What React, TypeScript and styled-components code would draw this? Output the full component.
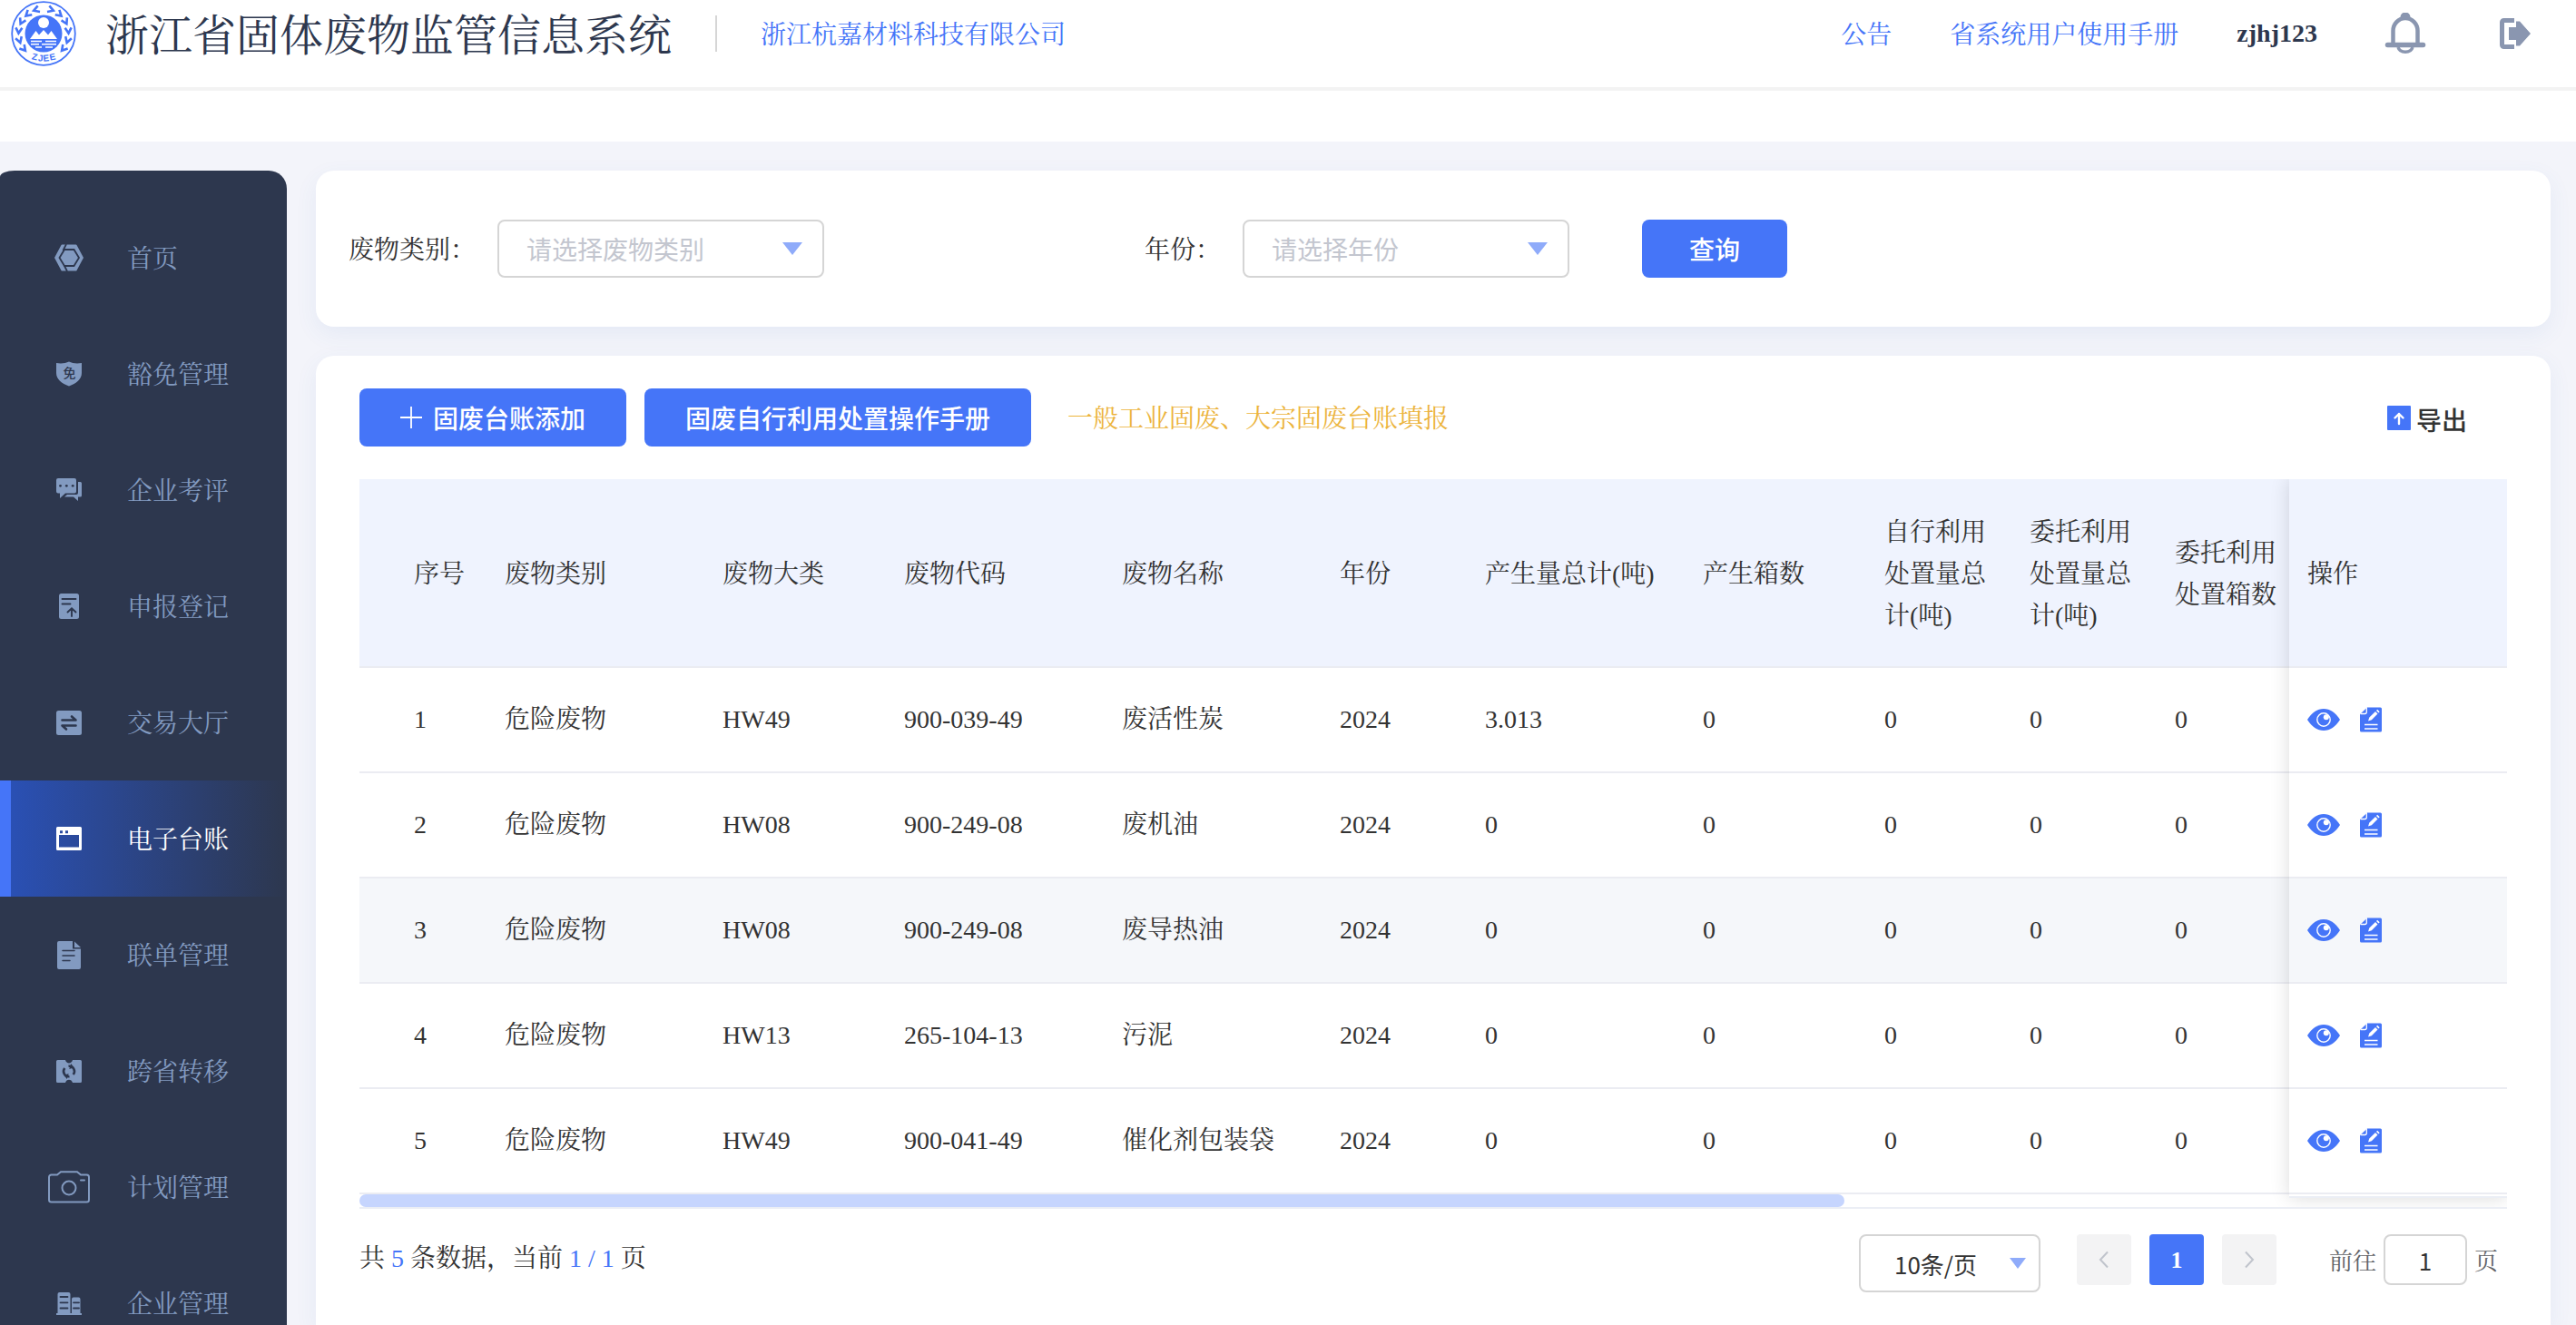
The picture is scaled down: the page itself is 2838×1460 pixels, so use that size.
import React from "react";
import styled, { createGlobalStyle, css } from "styled-components";

const BLUE = "#4575f8";
const INK = "#2d374e";
const MUTED = "#829ac0";
const SERIF = `"Liberation Serif", "Songti SC", "Noto Serif CJK SC", "Noto Sans CJK SC", serif`;
const SANS = `"PingFang SC", "Noto Sans CJK SC", sans-serif`;

const GlobalStyle = createGlobalStyle`
  * { box-sizing: border-box; }
  body { margin: 0; background: #f3f4fa; font: 28px/1.5 ${SERIF}; color: #333; }
  button, input, select { font: inherit; color: inherit; margin: 0; }
  a { color: inherit; text-decoration: none; }
`;

const Page = styled.div`
  height: 100vh;
  overflow: hidden;
  display: flex;
  flex-direction: column;
`;

/* ---------- header ---------- */

const Header = styled.header`
  flex: none;
  display: flex;
  align-items: center;
  justify-content: space-between;
  height: 100px;
  padding: 0 50px 22px 12px;
  background: #fff;
  border-bottom: 4px solid #f3f3f3;
`;

const TabStrip = styled.div`
  flex: none;
  height: 56px;
  background: #fff;
`;

const HeaderGroup = styled.div<{ $gap: number }>`
  display: flex;
  align-items: center;
  gap: ${(p) => p.$gap}px;
`;

const Brand = styled.h1`
  margin: 0 0 0 32px;
  padding-top: 6px;
  font-size: 48px;
  line-height: 72px;
  font-weight: 400;
  color: ${INK};
`;

const Divider = styled.span`
  width: 2px;
  height: 40px;
  margin: 0 48px 0 48px;
  background: #d6d6d6;
`;

const HeaderLink = styled.a`
  padding-top: 4px;
  color: ${BLUE};
`;

const UserName = styled.strong`
  margin-right: 10px;
  color: ${INK};
`;

const IconButton = styled.button`
  display: flex;
  padding: 0;
  border: 0;
  background: none;
  color: #8a96b0;
  cursor: pointer;
`;

/* ---------- shell ---------- */

const Shell = styled.div`
  flex: 1;
  min-height: 0;
  display: flex;
  gap: 32px;
  padding: 32px 28px 0 0;
`;

const Sidebar = styled.nav`
  flex: none;
  width: 316px;
  padding-top: 32px;
  overflow: hidden;
  background: ${INK};
  border-radius: 16px 20px 0 0 / 7px 20px 0 0;
`;

const NavItem = styled.a<{ $active?: boolean }>`
  display: flex;
  align-items: center;
  gap: 40px;
  height: 128px;
  padding-left: 40px;
  border-left: 12px solid transparent;
  color: ${MUTED};
  ${(p) =>
    p.$active &&
    css`
      color: #fff;
      border-left-color: ${BLUE};
      background: linear-gradient(90deg, #2a50b4, ${INK}) padding-box;
    `}
`;

const NavIcon = styled.span`
  display: flex;
  justify-content: center;
  width: 48px;
`;

const NavLabel = styled.span`
  padding-top: 4px;
`;

const Main = styled.main`
  flex: 1;
  min-width: 0;
  display: flex;
  flex-direction: column;
  gap: 32px;
`;

const Card = styled.section`
  background: #fff;
  border-radius: 20px;
  box-shadow: 0 8px 24px rgba(69, 117, 190, 0.08);
`;

/* ---------- filter ---------- */

const FilterForm = styled.form`
  display: grid;
  grid-template-columns: minmax(524px, 797px) auto auto;
  justify-content: start;
  align-items: center;
  column-gap: 80px;
  height: 172px;
  padding: 0 36px;
`;

const Field = styled.div`
  display: flex;
  align-items: center;
  gap: 24px;
`;

const FieldLabel = styled.label`
  padding-top: 4px;
`;

const SelectBox = styled.div<{ $width: number }>`
  position: relative;
  width: ${(p) => p.$width}px;
`;

const Select = styled.select<{ $pad: number; $size: number; $muted?: boolean }>`
  appearance: none;
  display: block;
  width: 100%;
  height: 64px;
  padding: 0 ${(p) => p.$pad}px;
  border: 2px solid #d5d5d5;
  border-radius: 8px;
  background: #fff;
  font-family: ${SANS};
  font-size: ${(p) => p.$size}px;
  color: ${(p) => (p.$muted ? "#c3c6cf" : "#333")};
`;

const Caret = styled.svg<{ $right: number }>`
  position: absolute;
  top: 50%;
  right: ${(p) => p.$right}px;
  transform: translateY(-50%);
  pointer-events: none;
`;

const Button = styled.button<{ $pad: number }>`
  display: flex;
  align-items: center;
  gap: 12px;
  height: 64px;
  padding: 0 ${(p) => p.$pad}px;
  border: 0;
  border-radius: 8px;
  background: ${BLUE};
  color: #fff;
  font-family: ${SANS};
  font-weight: 500;
  white-space: nowrap;
  cursor: pointer;
`;

/* ---------- list ---------- */

const ListCard = styled(Card)`
  flex: 1 0 auto;
  padding: 36px 48px;
  border-radius: 20px 20px 0 0;
`;

const Toolbar = styled.div`
  display: flex;
  align-items: center;
  gap: 20px;
  padding-right: 44px;
  margin-bottom: 36px;
`;

const Notice = styled.span`
  margin-left: 20px;
  padding-top: 4px;
  color: #ecb43c;
`;

const ExportButton = styled.button`
  display: flex;
  align-items: center;
  gap: 6px;
  margin-left: auto;
  padding: 0;
  border: 0;
  background: none;
  color: #333;
  font-family: ${SANS};
  font-weight: 500;
  cursor: pointer;
`;

const ExportLabel = styled.span`
  padding-top: 4px;
`;

const TableWrap = styled.div`
  position: relative;
  overflow: hidden;
  border-bottom: 2px solid #ebeef5;
`;

const Table = styled.table`
  width: 100%;
  table-layout: fixed;
  border-collapse: separate;
  border-spacing: 0;
`;

const cell = css`
  border-bottom: 2px solid #ebecf2;
  text-align: left;
  font-weight: 400;
  line-height: 46px;
`;

const HeadCell = styled.th`
  ${cell}
  height: 208px;
  padding: 4px 14px 0 20px;
  background: #eff3fe;
`;

const Row = styled.tr<{ $hover?: boolean }>`
  background: ${(p) => (p.$hover ? "#f5f7fa" : "#fff")};
`;

const Cell = styled.td`
  ${cell}
  height: 116px;
  padding: 0 14px 0 20px;
`;

const Actions = styled.div`
  display: flex;
  align-items: center;
  gap: 22px;
`;

const FixedShade = styled.div`
  position: absolute;
  top: 0;
  right: 0;
  bottom: 10px;
  width: 240px;
  border-bottom: 2px solid #ebeef5;
  box-shadow: 0 0 20px rgba(0, 0, 0, 0.14);
  pointer-events: none;
`;

const ScrollTrack = styled.div`
  height: 14px;
`;

const ScrollThumb = styled.div`
  height: 14px;
  border-radius: 7px;
  background: #c6d5fe;
`;

/* ---------- pagination ---------- */

const Footer = styled.div`
  display: flex;
  align-items: flex-start;
  justify-content: space-between;
  padding: 28px 0 0;
`;

const Summary = styled.p`
  margin: 6px 0 0;
  em {
    font-style: normal;
    color: ${BLUE};
  }
`;

const Pager = styled.div`
  display: flex;
  align-items: flex-start;
  padding-right: 10px;
`;

const PageButtons = styled.div`
  display: flex;
  gap: 20px;
  margin: 0 58px 0 40px;
`;

const PageButton = styled.button<{ $active?: boolean }>`
  display: flex;
  align-items: center;
  justify-content: center;
  width: 60px;
  height: 56px;
  padding: 0;
  border: 0;
  border-radius: 4px;
  font-size: 26px;
  font-weight: 700;
  background: ${(p) => (p.$active ? BLUE : "#f3f3f4")};
  color: ${(p) => (p.$active ? "#fff" : "#c0c4cc")};
`;

const Jump = styled.label`
  display: flex;
  align-items: center;
  gap: 8px;
  font-size: 26px;
  color: #606266;
`;

const JumpText = styled.span`
  padding-top: 4px;
`;

const JumpInput = styled.input`
  width: 92px;
  height: 56px;
  padding: 0;
  border: 2px solid #d5d5d5;
  border-radius: 8px;
  text-align: center;
  font-family: ${SANS};
  color: #333;
`;

/* ---------- drawings ---------- */

const leaves = [0, 1, 2, 3, 4, 5].map((i) => 50 + i * 22);

const Logo = () => (
  <svg width="72" height="72" viewBox="0 0 72 72" role="img" aria-label="ZJEE">
    <circle cx="36" cy="36" r="34.8" fill="#fff" stroke={BLUE} strokeWidth="1.800" />
    <circle cx="36" cy="36" r="20.5" fill={BLUE} />
    <circle cx="36" cy="24" r="6" fill="#fff" />
    <path d="M21 42l6.500-9 3.500 4.500 5-5.500 5 5.500 3.500-4.500 6.500 9z" fill="#fff" />
    <g stroke="#fff" strokeWidth="1.500">
      <path d="M22 44.500h12M38 44.500h12M22 47.800h9M34 47.800h16M27 51h7M38 51h8" />
    </g>
    <g fill="none" stroke={BLUE} strokeWidth="2.600">
      {leaves.map((a) => (
        <React.Fragment key={a}>
          <path d="M-3.500 4.500L0 -1.500L3.500 4.500" transform={`rotate(${a} 36 36) translate(36 63.500) rotate(90)`} />
          <path d="M-3.500 4.500L0 -1.500L3.500 4.500" transform={`rotate(${-a} 36 36) translate(36 63.500) rotate(-90)`} />
        </React.Fragment>
      ))}
    </g>
    <g fill={BLUE} fontFamily="Liberation Sans, sans-serif" fontWeight="700" fontSize="10" textAnchor="middle">
      <text transform="translate(25.500 65) rotate(12)">Z</text>
      <text transform="translate(32.500 66.500) rotate(4)">J</text>
      <text transform="translate(39 66.500) rotate(-5)">E</text>
      <text transform="translate(46.500 65) rotate(-12)">E</text>
    </g>
  </svg>
);

const BellIcon = () => (
  <svg width="46" height="46" viewBox="0 0 46 46" fill="none" stroke="currentColor">
    <path d="M9.500 35V20a13.500 14 0 0 1 27 0v15" strokeWidth="4.500" />
    <path d="M3.500 35.500h39" strokeWidth="5.500" strokeLinecap="round" />
    <path d="M15 38c2 7 14 7 16 0" strokeWidth="3.500" />
    <path d="M19.500 5a3.500 3.500 0 0 1 7 0" strokeWidth="4" fill="currentColor" />
  </svg>
);

const LogoutIcon = () => (
  <svg width="34" height="34" viewBox="0 0 34 34">
    <path d="M16 2.500H4.500A2 2 0 0 0 2.500 4.500v25a2 2 0 0 0 2 2H16" fill="none" stroke="currentColor" strokeWidth="5" strokeLinejoin="round" />
    <path d="M10 10h8V3.500h4L34 17 22 30.500h-4V24h-8z" fill="currentColor" />
  </svg>
);

const HomeIcon = () => (
  <svg width="32" height="30" viewBox="0 0 32 30">
    <path d="M8.500.500h15a1 1 0 0 1 1 .5L32 15l-7.500 14a1 1 0 0 1-1 .5h-15a1 1 0 0 1-1-.5L0 15 7.500 1a1 1 0 0 1 1-.5z" fill="currentColor" />
    <path d="M11 6h10.500l5.500 9-5.500 9H11L5.500 15z" fill="none" stroke={INK} strokeWidth="1.800" />
    <path d="M13 0L9.500 7M11 24l3 6" stroke={INK} strokeWidth="1.800" />
  </svg>
);

const ShieldIcon = () => (
  <svg width="28" height="28" viewBox="0 0 28 28">
    <path d="M14 .5C10 2.500 5 3 0 2v11c0 7 6 11.500 14 14.500 8-3 14-7.500 14-14.500V2C23 3 18 2.500 14 .5z" fill="currentColor" />
    <text x="14.500" y="18" fontSize="14" fontWeight="500" textAnchor="middle" fill={INK} fontFamily="Noto Sans CJK SC, sans-serif">免</text>
  </svg>
);

const ChatIcon = () => (
  <svg width="28" height="26" viewBox="0 0 28 26">
    <path d="M2 0h18a2 2 0 0 1 2 2v12.500a2 2 0 0 1-2 2H10L4 22v-5.500H2a2 2 0 0 1-2-2V2a2 2 0 0 1 2-2z" fill="currentColor" />
    <path d="M24 4h2.500A1.500 1.500 0 0 1 28 5.500V19a1.500 1.500 0 0 1-1.500 1.500H24V25l-5-4.500H9l3-2.500h10a2 2 0 0 0 2-2z" fill="currentColor" />
    <g fill={INK}><circle cx="4.500" cy="8.300" r="1.400" /><circle cx="11.300" cy="8.300" r="1.400" /><circle cx="18.200" cy="8.300" r="1.400" /></g>
  </svg>
);

const DeclareIcon = () => (
  <svg width="22" height="28" viewBox="0 0 22 28">
    <rect width="22" height="28" rx="2.500" fill="currentColor" />
    <path d="M3.500 6h15M3.500 11.500h9M14 25v-8.500M9.500 20.500l4.500-4.300 4.500 4.300" fill="none" stroke={INK} strokeWidth="1.900" strokeLinecap="round" />
  </svg>
);

const TradeIcon = () => (
  <svg width="28" height="27" viewBox="0 0 28 27">
    <rect width="28" height="27" rx="2.500" fill="currentColor" />
    <path d="M6.500 10.500h15L17 6.500M21.500 16.500h-15L11 20.500" fill="none" stroke={INK} strokeWidth="2.600" strokeLinecap="round" strokeLinejoin="round" />
  </svg>
);

const LedgerIcon = () => (
  <svg width="28" height="26" viewBox="0 0 28 26">
    <path fillRule="evenodd" d="M1.500 0h25A1.500 1.500 0 0 1 28 1.500v23a1.500 1.500 0 0 1-1.500 1.500h-25A1.500 1.500 0 0 1 0 24.500v-23A1.500 1.500 0 0 1 1.500 0zM3 9v13.500h22V9zM4 4.300v3h3v-3zm6 0v3h3v-3z" fill="currentColor" />
  </svg>
);

const DocIcon = () => (
  <svg width="26" height="31" viewBox="0 0 26 31">
    <path d="M2 0h15v8.500h9V29a2 2 0 0 1-2 2H2a2 2 0 0 1-2-2V2a2 2 0 0 1 2-2z" fill="currentColor" />
    <path d="M19 .5L26 7h-7z" fill="currentColor" />
    <path d="M6 10.500h13M6 16h13M6 21.500h8" stroke={INK} strokeWidth="1.500" strokeLinecap="round" />
  </svg>
);

const TransferIcon = () => (
  <svg width="28" height="25" viewBox="0 0 28 25">
    <path d="M1.500 0H10c1 4.500 7 4.500 8 0h8.500A1.500 1.500 0 0 1 28 1.500v22a1.500 1.500 0 0 1-1.500 1.500H18c-1-4.500-7-4.500-8 0H1.500A1.500 1.500 0 0 1 0 23.500v-22A1.500 1.500 0 0 1 1.500 0z" fill="currentColor" />
    <path d="M9.300 9a5.700 5.700 0 0 0 5.200 9.200M18.700 16a5.700 5.700 0 0 0-5.200-9.200" fill="none" stroke={INK} strokeWidth="2.600" />
    <path d="M14.500 15v6.200l-4.500-3zM13.500 10V3.800l4.500 3z" fill={INK} transform="rotate(18 14 12.500)" />
  </svg>
);

const CameraIcon = () => (
  <svg width="46" height="36" viewBox="0 0 46 36" fill="none" stroke="currentColor" strokeWidth="2">
    <path d="M3.500 4.500H10L14 1.300h18L36 4.500h6.500A2.500 2.500 0 0 1 45 7v25a2.500 2.500 0 0 1-2.500 2.500h-39A2.500 2.500 0 0 1 1 32V7a2.500 2.500 0 0 1 2.500-2.500z" />
    <circle cx="23" cy="19" r="7.500" />
    <path d="M36 10.500h4" strokeLinecap="round" />
  </svg>
);

const CompanyIcon = () => (
  <svg width="28" height="25" viewBox="0 0 28 25">
    <path d="M0 23h1.500V2a2 2 0 0 1 2-2h10a2 2 0 0 1 2 2v21H17V7.500a2 2 0 0 1 2-2h5.500a2 2 0 0 1 2 2V23H28v2H0z" fill="currentColor" />
    <path d="M4.500 5h8M4.500 11.300h8M4.500 17.500h8M19 11.300h6M19 17.500h6" stroke={INK} strokeWidth="1.800" strokeLinecap="round" />
  </svg>
);

const EyeIcon = () => (
  <svg width="36" height="26" viewBox="0 0 36 26">
    <path d="M0 13C5 5 11 1 18 1s13 4 18 12c-5 8-11 12-18 12S5 21 0 13z" fill={BLUE} />
    <circle cx="18" cy="13" r="7.200" fill="none" stroke="#fff" strokeWidth="1.400" />
    <circle cx="20.800" cy="10.200" r="3" fill="#fff" />
  </svg>
);

const EditIcon = () => (
  <svg width="24" height="28" viewBox="0 0 24 28">
    <path d="M8 .5h14.500A1.500 1.500 0 0 1 24 2v24a1.500 1.500 0 0 1-1.500 1.500h-21A1.500 1.500 0 0 1 0 26V8z" fill={BLUE} />
    <path d="M.5 7.500h5A2 2 0 0 0 7.300 6V.5" fill="none" stroke="#fff" strokeWidth="1.300" />
    <path d="M9 15.500l1.300-4L17 5l2.500 2.500-6.700 6.700zM18 4l1.200-1.200 2.500 2.500L20.500 6.500z" fill="#fff" />
    <path d="M5 19.500h14.500M5 24h14.500" stroke="#fff" strokeWidth="1.300" />
  </svg>
);

const PlusIcon = () => (
  <svg width="24" height="24" viewBox="0 0 24 24">
    <path d="M12 0v24M0 12h24" stroke="#fff" strokeWidth="1.800" />
  </svg>
);

const ExportIcon = () => (
  <svg width="26" height="27" viewBox="0 0 26 27">
    <rect width="26" height="27" rx="1" fill={BLUE} />
    <path d="M13 20V9M8.500 13.500L13 9l4.500 4.500" fill="none" stroke="#fff" strokeWidth="2.400" strokeLinecap="round" strokeLinejoin="round" />
  </svg>
);

const Down = ({ width, height, right }: { width: number; height: number; right: number }) => (
  <Caret width={width} height={height} viewBox="0 0 22 14" preserveAspectRatio="none" $right={right}>
    <path d="M0 0h22L11 14z" fill="#8fabfa" />
  </Caret>
);

const Chevron = ({ flip }: { flip?: boolean }) => (
  <svg width="12" height="20" viewBox="0 0 12 20" fill="none" stroke="#c0c4cc" strokeWidth="2">
    <path d={flip ? "M2 1.500l8 8.500-8 8.500" : "M10 1.500L2 10l8 8.500"} />
  </svg>
);

/* ---------- data ---------- */

const nav = [
  { label: "首页", Icon: HomeIcon },
  { label: "豁免管理", Icon: ShieldIcon },
  { label: "企业考评", Icon: ChatIcon },
  { label: "申报登记", Icon: DeclareIcon },
  { label: "交易大厅", Icon: TradeIcon },
  { label: "电子台账", Icon: LedgerIcon, active: true },
  { label: "联单管理", Icon: DocIcon },
  { label: "跨省转移", Icon: TransferIcon },
  { label: "计划管理", Icon: CameraIcon },
  { label: "企业管理", Icon: CompanyIcon },
];

const columns: { title: string; width?: number }[] = [
  { title: "", width: 40 },
  { title: "序号", width: 100 },
  { title: "废物类别", width: 240 },
  { title: "废物大类", width: 200 },
  { title: "废物代码", width: 240 },
  { title: "废物名称", width: 240 },
  { title: "年份", width: 160 },
  { title: "产生量总计(吨)", width: 240 },
  { title: "产生箱数", width: 200 },
  { title: "自行利用处置量总计(吨)", width: 160 },
  { title: "委托利用处置量总计(吨)", width: 160 },
  { title: "委托利用处置箱数" },
  { title: "操作", width: 240 },
];

const rows = [
  ["HW49", "900-039-49", "废活性炭", "3.013"],
  ["HW08", "900-249-08", "废机油", "0"],
  ["HW08", "900-249-08", "废导热油", "0"],
  ["HW13", "265-104-13", "污泥", "0"],
  ["HW49", "900-041-49", "催化剂包装袋", "0"],
];

export default function App() {
  return (
    <Page>
      <GlobalStyle />
      <Header>
        <HeaderGroup $gap={0}>
          <Logo />
          <Brand>浙江省固体废物监管信息系统</Brand>
          <Divider />
          <HeaderLink href="#company">浙江杭嘉材料科技有限公司</HeaderLink>
        </HeaderGroup>
        <HeaderGroup $gap={64}>
          <HeaderLink href="#notice">公告</HeaderLink>
          <HeaderLink href="#manual">省系统用户使用手册</HeaderLink>
          <UserName>zjhj123</UserName>
          <HeaderGroup $gap={81}>
            <IconButton type="button" aria-label="消息"><BellIcon /></IconButton>
            <IconButton type="button" aria-label="退出"><LogoutIcon /></IconButton>
          </HeaderGroup>
        </HeaderGroup>
      </Header>
      <TabStrip />
      <Shell>
        <Sidebar>
          {nav.map(({ label, Icon, active }) => (
            <NavItem key={label} href="#nav" $active={active}>
              <NavIcon><Icon /></NavIcon>
              <NavLabel>{label}</NavLabel>
            </NavItem>
          ))}
        </Sidebar>
        <Main>
          <Card>
            <FilterForm onSubmit={(e) => e.preventDefault()}>
              <Field>
                <FieldLabel htmlFor="kind">废物类别：</FieldLabel>
                <SelectBox $width={360}>
                  <Select id="kind" $pad={30} $size={28} $muted defaultValue="">
                    <option value="">请选择废物类别</option>
                  </Select>
                  <Down width={22} height={14} right={24} />
                </SelectBox>
              </Field>
              <Field>
                <FieldLabel htmlFor="year">年份：</FieldLabel>
                <SelectBox $width={360}>
                  <Select id="year" $pad={30} $size={28} $muted defaultValue="">
                    <option value="">请选择年份</option>
                  </Select>
                  <Down width={22} height={14} right={24} />
                </SelectBox>
              </Field>
              <Button type="submit" $pad={52}>查询</Button>
            </FilterForm>
          </Card>
          <ListCard>
            <Toolbar>
              <Button type="button" $pad={45}><PlusIcon />固废台账添加</Button>
              <Button type="button" $pad={45}>固废自行利用处置操作手册</Button>
              <Notice>一般工业固废、大宗固废台账填报</Notice>
              <ExportButton type="button"><ExportIcon /><ExportLabel>导出</ExportLabel></ExportButton>
            </Toolbar>
            <TableWrap>
              <Table>
                <colgroup>
                  {columns.map((c) => (
                    <col key={c.title} style={{ width: c.width }} />
                  ))}
                </colgroup>
                <thead>
                  <tr>{columns.map((c) => <HeadCell key={c.title}>{c.title}</HeadCell>)}</tr>
                </thead>
                <tbody>
                  {rows.map(([big, code, name, amount], i) => (
                    <Row key={code + name} $hover={i === 2}>
                      <Cell />
                      <Cell>{i + 1}</Cell>
                      <Cell>危险废物</Cell>
                      <Cell>{big}</Cell>
                      <Cell>{code}</Cell>
                      <Cell>{name}</Cell>
                      <Cell>2024</Cell>
                      <Cell>{amount}</Cell>
                      <Cell>0</Cell>
                      <Cell>0</Cell>
                      <Cell>0</Cell>
                      <Cell>0</Cell>
                      <Cell>
                        <Actions>
                          <IconButton type="button" aria-label="查看"><EyeIcon /></IconButton>
                          <IconButton type="button" aria-label="编辑"><EditIcon /></IconButton>
                        </Actions>
                      </Cell>
                    </Row>
                  ))}
                </tbody>
              </Table>
              <ScrollTrack>
                <ScrollThumb style={{ width: `${(2366 / 3422) * 100}%` }} />
              </ScrollTrack>
              <FixedShade />
            </TableWrap>
            <Footer>
              <Summary>
                共 <em>5</em> 条数据，当前 <em>1 / 1</em> 页
              </Summary>
              <Pager>
                <SelectBox $width={200}>
                  <Select aria-label="每页条数" $pad={37} $size={26} defaultValue="10">
                    <option value="10">10条/页</option>
                  </Select>
                  <Down width={18} height={12} right={16} />
                </SelectBox>
                <PageButtons>
                  <PageButton type="button" aria-label="上一页"><Chevron /></PageButton>
                  <PageButton type="button" $active>1</PageButton>
                  <PageButton type="button" aria-label="下一页"><Chevron flip /></PageButton>
                </PageButtons>
                <Jump>
                  <JumpText>前往</JumpText>
                  <JumpInput defaultValue="1" />
                  <JumpText>页</JumpText>
                </Jump>
              </Pager>
            </Footer>
          </ListCard>
        </Main>
      </Shell>
    </Page>
  );
}
